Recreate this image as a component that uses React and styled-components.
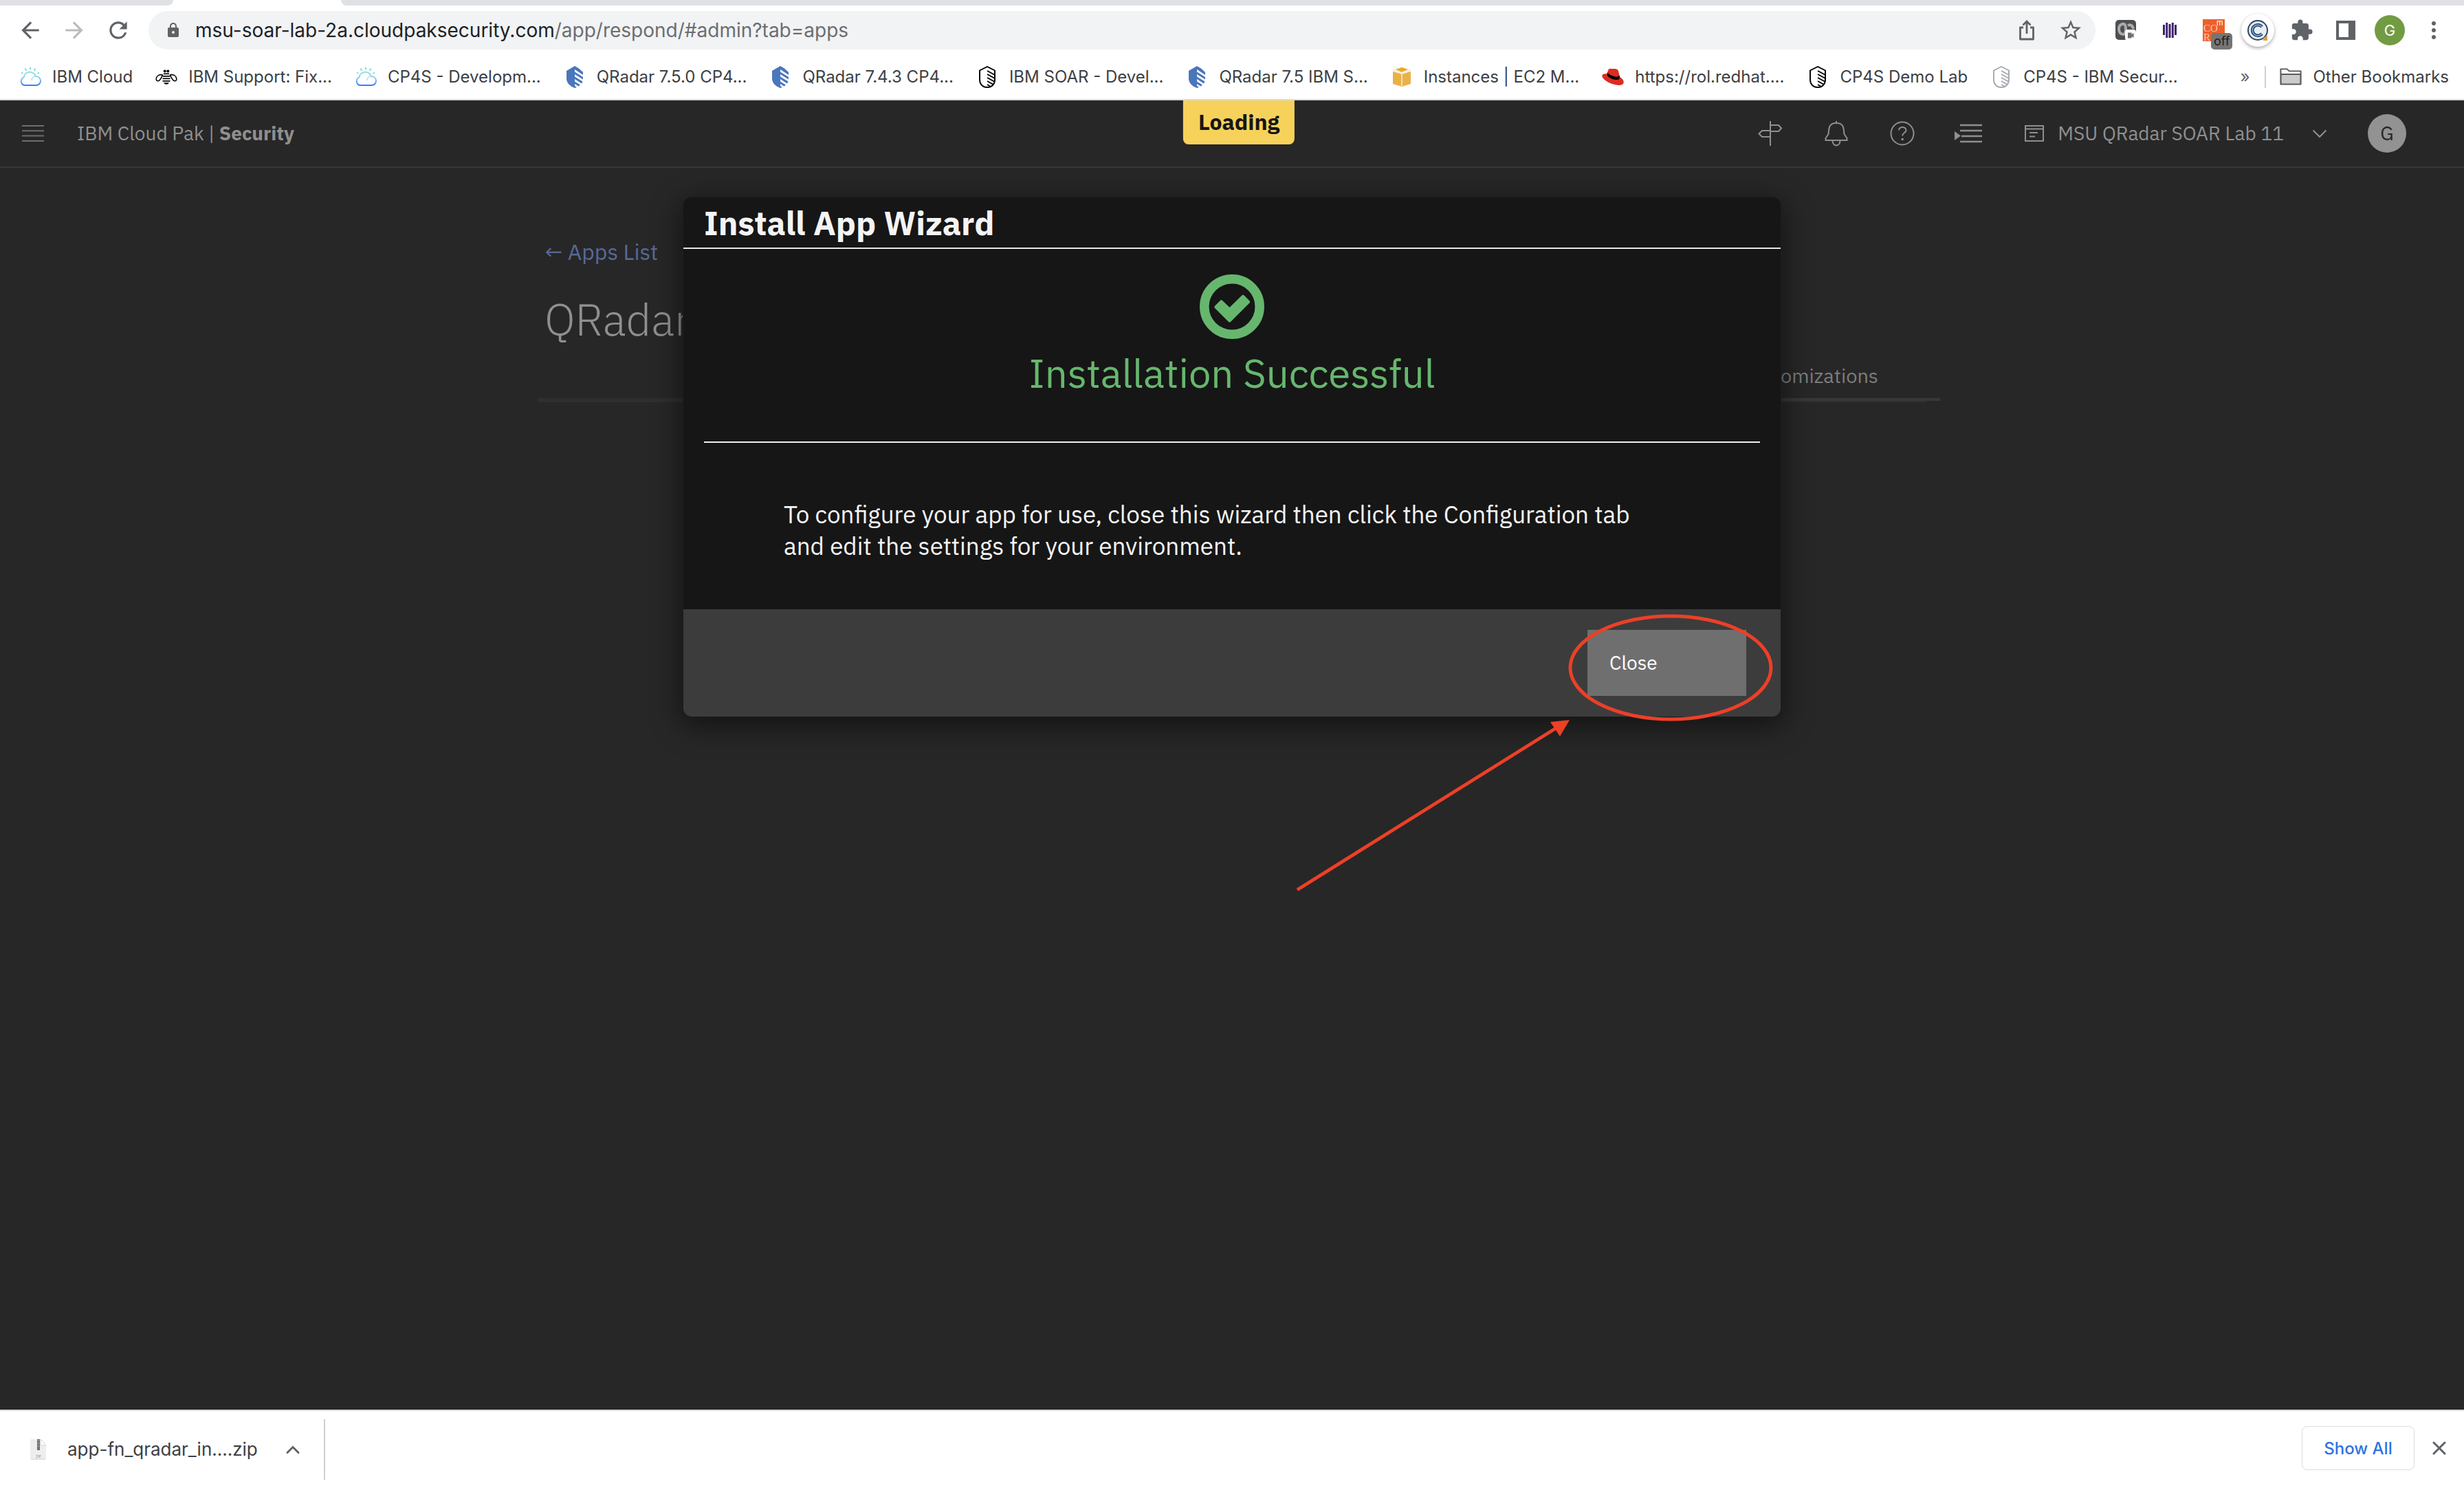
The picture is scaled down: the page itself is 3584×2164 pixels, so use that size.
import React from "react";
import styled, { createGlobalStyle } from "styled-components";
import { MdArrowBack, MdArrowForward, MdRefresh, MdLock, MdStarBorder, MdExtension } from "react-icons/md";

const GlobalStyle = createGlobalStyle`
  *, *::before, *::after { box-sizing: border-box; }
  body { margin: 0; background: #272727; }
  button, a { font: inherit; color: inherit; text-decoration: none; }
  button { border: 0; padding: 0; background: none; cursor: pointer; }
  h1, h2, p, ul { margin: 0; padding: 0; font-weight: inherit; }
  svg { display: block; flex: none; }
`;

const chromeFont = `Inter, Roboto, sans-serif`;
const appFont = `"IBM Plex Sans", "Noto Sans", Inter, sans-serif`;

/* ---------- browser chrome ---------- */

const Window = styled.div`
  display: flex;
  flex-direction: column;
  min-height: 100vh;
  font-family: ${chromeFont};
  color: #3c4043;
`;

const TabStrip = styled.div`
  display: flex;
  justify-content: space-between;
  height: 8px;
  background: #fff;
`;

const InactiveTabs = styled.div`
  background: #dfe1e5;
  flex: ${(p) => (p.$grow ? "1" : "0 0 252px")};
  margin-left: ${(p) => (p.$grow ? "244px" : "0")};
  border-radius: ${(p) => (p.$grow ? "0 0 0 12px" : "0 0 12px 0")};
`;

const Toolbar = styled.div`
  display: flex;
  align-items: center;
  padding: 8px 12px 8px 28px;
  background: #fff;
`;

const NavButtons = styled.nav`
  display: flex;
  gap: 32px;
  margin-right: 28px;
`;

const NavButton = styled.button`
  display: flex;
  align-items: center;
  justify-content: center;
  width: 32px;
  height: 32px;
  color: ${(p) => (p.$off ? "#babcbe" : "#5f6368")};
`;

const Omnibox = styled.div`
  display: flex;
  align-items: center;
  flex: 1;
  height: 56px;
  margin-right: 12px;
  padding: 0 4px 0 24px;
  border-radius: 28px;
  background: #f1f3f4;
  color: #5f6368;
`;

const Address = styled.div`
  flex: 1;
  margin-left: 20px;
  font-size: 28px;
  line-height: 36px;
  white-space: nowrap;
  color: #6b6e71;
`;

const Host = styled.span`
  color: #202124;
`;

const ToolButton = styled.button`
  position: relative;
  display: flex;
  align-items: center;
  justify-content: center;
  width: 64px;
  height: 56px;
  color: #5f6368;
`;

const Badge = styled.span`
  position: absolute;
  left: 28px;
  bottom: 0;
  padding: 0 4px;
  border-radius: 5px;
  background: #757575;
  color: #202124;
  font-size: 18px;
  line-height: 24px;
`;

const Halo = styled.span`
  display: flex;
  align-items: center;
  justify-content: center;
  width: 48px;
  height: 48px;
  border-radius: 50%;
  background: #fff;
  box-shadow: 0 2px 5px rgba(0, 0, 0, 0.35);
`;

const Profile = styled.span`
  display: flex;
  align-items: center;
  justify-content: center;
  width: 44px;
  height: 44px;
  border-radius: 50%;
  background: #719c43;
  color: #fff;
  font-size: 22px;
`;

const BookmarksBar = styled.div`
  display: flex;
  align-items: center;
  height: 66px;
  padding: 0 22px 0 28px;
  border-bottom: 2px solid #dadcdc;
  background: #fff;
  font-size: 24px;
  line-height: 32px;
  white-space: nowrap;
`;

const BookmarkList = styled.ul`
  display: flex;
  flex: 1;
  gap: 33px;
  list-style: none;
`;

const Bookmark = styled.a`
  display: flex;
  align-items: center;
  gap: 16px;
`;

const More = styled.button`
  padding: 0 22px;
  color: #5f6368;
`;

const BarDivider = styled.span`
  width: 2px;
  height: ${(p) => p.$size}px;
  background: #cfd0d2;
`;

const OtherBookmarks = styled(Bookmark)`
  margin-left: 20px;
`;

const DownloadBar = styled.footer`
  display: flex;
  align-items: center;
  height: 114px;
  padding: 0 20px 0 40px;
  border-top: 2px solid #dadcdc;
  background: #fff;
`;

const DownloadItem = styled.button`
  display: flex;
  align-items: center;
  margin-right: 34px;
  font-size: 26px;
  line-height: 32px;
`;

const FileName = styled.span`
  margin: 0 40px 0 26px;
`;

const DownloadActions = styled.div`
  display: flex;
  align-items: center;
  gap: 20px;
  margin-left: auto;
  padding-bottom: 4px;
`;

const ShowAll = styled.button`
  width: 164px;
  height: 64px;
  border: 1px solid #dadce0;
  border-radius: 8px;
  color: #2f72e2;
  font-size: 24px;
  font-weight: 500;
`;

/* ---------- application ---------- */

const AppArea = styled.div`
  position: relative;
  display: flex;
  flex: 1;
  flex-direction: column;
  background: #272727;
  font-family: ${appFont};
  color: #8f8f8f;
`;

const AppHeader = styled.header`
  display: flex;
  align-items: center;
  height: 98px;
  padding: 0 84px 0 32px;
  border-bottom: 2px solid #383838;
  font-size: 28px;
  line-height: 36px;
  white-space: nowrap;
`;

const Brand = styled.a`
  flex: 1;
  margin-left: 48px;
`;

const HeaderButton = styled.button`
  display: flex;
  align-items: center;
  justify-content: center;
  width: 96px;
  height: 96px;
`;

const AccountButton = styled.button`
  display: flex;
  align-items: center;
  margin: 0 54px 0 32px;
`;

const AccountName = styled.span`
  margin: 0 36px 0 18px;
`;

const Avatar = styled.button`
  width: 56px;
  height: 56px;
  border-radius: 50%;
  background: #929292;
  color: #272727;
`;

const LoadingBadge = styled.div`
  position: absolute;
  top: 0;
  left: calc(50% + 10px);
  transform: translateX(-50%);
  padding: 11px 22px 13px;
  border-radius: 0 0 8px 8px;
  background: #f6d25b;
  color: #161616;
  font-size: 32px;
  font-weight: 700;
  line-height: 40px;
`;

const Page = styled.main`
  width: 2040px;
  max-width: 100%;
  margin: 0 auto;
  padding: 102px 0 0;
  position: relative;
  left: 10px;
`;

const BackLink = styled.a`
  display: block;
  padding: 0 10px;
  color: #576a98;
  font-size: 32px;
  line-height: 40px;
`;

const PageTitle = styled.h1`
  margin: 38px 0 24px;
  padding: 0 10px;
  font-size: 64px;
  font-weight: 300;
  line-height: 80px;
`;

const Tabs = styled.div`
  display: flex;
`;

const TabFiller = styled.div`
  flex: 1;
  border-bottom: 6px solid #2f2f2f;
`;

const Tab = styled.button`
  padding: 0 90px 15px 32px;
  margin-bottom: 2px;
  border-bottom: 4px solid #383838;
  box-shadow: -20px 2px 0 #2f2f2f;
  background: #272727;
  color: #7c7c7c;
  font-size: 29px;
  line-height: 36px;
`;

const Overlay = styled.div`
  position: absolute;
  inset: 0;
  display: flex;
  justify-content: center;
  align-items: flex-start;
  padding-top: 141px;
`;

const Dialog = styled.section`
  position: relative;
  width: 1596px;
  border-radius: 12px;
  background: #161616;
  box-shadow: 0 0 0 1px #1e1e1e, 0 10px 40px 4px rgba(0, 0, 0, 0.5);
  color: #f4f4f4;
`;

const DialogTitle = styled.h2`
  padding: 5px 30px 4px;
  border-bottom: 2px solid #e8e6e8;
  font-size: 48px;
  font-weight: 700;
  line-height: 64px;
`;

const Result = styled.div`
  display: flex;
  flex-direction: column;
  align-items: center;
  gap: 14px;
  margin: 0 30px;
  padding: 37px 0 63px;
  border-bottom: 2px solid #f1eff1;
  color: #66b76d;
  font-size: 58px;
  line-height: 72px;
`;

const Message = styled.p`
  max-width: 1426px;
  padding: 81px 0 69px 146px;
  font-size: 35px;
  line-height: 46px;
`;

const DialogFooter = styled.footer`
  display: flex;
  justify-content: flex-end;
  padding: 30px 50px;
  border-radius: 0 0 12px 12px;
  background: #3c3c3c;
`;

const CloseButton = styled.button`
  width: 231px;
  height: 96px;
  padding: 0 32px;
  background: #6f6f6f;
  color: #fff;
  font-size: 28px;
  line-height: 36px;
  text-align: left;
`;

const Annotation = styled.svg`
  position: absolute;
  top: 593px;
  left: 886px;
  pointer-events: none;
`;

/* ---------- drawings ---------- */

const CloudIcon = () => (
  <svg width="32" height="32" viewBox="0 0 32 32" fill="none">
    <defs>
      <linearGradient id="cloud" x1="0" y1="0" x2="0" y2="1">
        <stop offset="0" stopColor="#8be3d6" />
        <stop offset="0.5" stopColor="#8ec9f7" />
        <stop offset="1" stopColor="#3b7bf6" />
      </linearGradient>
    </defs>
    <path d="M8 28a6 6 0 0 1-1.500-11.500a9 9 0 0 1 17.500-1.500a6.500 6.500 0 0 1 1 13z" stroke="url(#cloud)" strokeWidth="2" />
    <path d="M24 15c-4 0-6 3-6 6" stroke="#a8d8f8" strokeWidth="1.500" />
    <path d="M16 1.500v4M8.500 3.500l1.800 3.500M23.500 3.500l-1.800 3.500M3 9.500l2.500 1.500M29 9.500l-2.500 1.500" stroke="#79dccb" strokeWidth="1.700" />
  </svg>
);

const BeeIcon = () => (
  <svg width="32" height="32" viewBox="0 0 32 32">
    <g fill="#000">
      <circle cx="13.700" cy="7.500" r="2" />
      <circle cx="18.300" cy="7.500" r="2" />
      <rect x="12" y="10.500" width="8" height="1.700" />
      <rect x="10.500" y="14" width="11" height="1.700" />
      <rect x="10.500" y="17.500" width="11" height="1.700" />
      <rect x="10.500" y="21" width="11" height="1.700" />
      <path d="M12 24.200h8l-2 2.300h-4z" />
    </g>
    <path d="M10.500 13C5 11.500 1 15 1.200 19.500c.3 3 4 2.500 5.500.5 1.700-2.300 3-4.500 3.800-7zM21.500 13C27 11.500 31 15 30.800 19.500c-.3 3-4 2.500-5.500.5-1.700-2.300-3-4.500-3.800-7z" fill="none" stroke="#000" strokeWidth="1.500" />
  </svg>
);

const ShieldIcon = () => (
  <svg width="32" height="32" viewBox="0 0 32 32" fill="#4a76bb">
    <path d="M16 0v32C8 29 4 24 4 18V7z" />
    <path d="M16 0l6 3.500L28 9v4L16 5zM16 8.500l12 7.500v3.500l-12-7.500zM16 15.500l11.500 7-1.500 3-10-6.500zM16 22.500l8 5-2.500 2-5.500-3.500zM16 29l3 1.700L16 32z" />
  </svg>
);

const StripedShield = ({ color }) => (
  <svg width="32" height="32" viewBox="0 0 32 32" fill="none" stroke={color}>
    <path d="M16 31C9 31 5 26 5 20V6.500L16 1l11 5.500V20c0 6-4 11-11 11z" strokeWidth="1.900" />
    <path d="M16 7l11 6M16 12l11 6M16 17l11 6M16 22l9 5M16 27l5 3" strokeWidth="1.900" />
  </svg>
);

const CubeIcon = () => (
  <svg width="32" height="32" viewBox="0 0 32 32">
    <path d="M16 2l13 4v20l-13 4-13-4V6z" fill="#e9b248" />
    <path d="M8 5l8-3 8 3-8 3z" fill="#eba92c" />
    <path d="M3 6l4-1 9 4 9-4 4 1v2l-13 4L3 8z" fill="#fbf1dc" />
    <path d="M15 11h2v18h-2z" fill="#f7dfae" />
  </svg>
);

const HatIcon = () => (
  <svg width="32" height="32" viewBox="0 0 32 32">
    <path d="M9 6.500c.8-2.500 3-3.500 6-2.200 1.600-.6 6-.3 8 1.200 1.500 1.200 2 7 3 10.500 4 2 6 5 5.700 8-.8 4.500-8 4.800-15 2.500C8 24 .5 18.500.3 14.500.3 11.500 4 11 7.500 11.500z" fill="#dd2c20" />
    <path d="M7.500 11.500c0 3 3 5.500 8 7.500 5.500 2 11 1.500 10.500-3.500l-.6-2.200c-1 3-5 3-10 1C11 12.800 8.600 10.500 8.300 9z" fill="#000" />
  </svg>
);

const FolderIcon = () => (
  <svg width="32" height="32" viewBox="0 0 32 32">
    <path d="M1.500 26.500V4.500h9l3 3h17v19z" fill="#cbcbcb" stroke="#5a5a5a" strokeWidth="2.200" strokeLinejoin="round" />
    <path d="M2.500 5.500h8l3 3h16V11h-27z" fill="#fff" />
    <path d="M1.500 12h29" stroke="#5a5a5a" strokeWidth="2" />
  </svg>
);

const ShareIcon = () => (
  <svg width="32" height="32" viewBox="0 0 32 32" fill="none" stroke="#5f6368" strokeWidth="2.800">
    <path d="M11 12H6.500v17h19V12H21" strokeLinejoin="round" />
    <path d="M16 21V4M10.500 8.500L16 3l5.500 5.500" />
  </svg>
);

const RecorderIcon = () => (
  <svg width="30" height="30" viewBox="0 0 30 30">
    <rect width="30" height="29" rx="5" fill="#4d4f50" />
    <path d="M8 7c5-3 7 0 7 6s-1 8-4 8-6-3-6-8c0-3 1-5 3-6zM18 8c4-2 7 0 8 5" stroke="#a9abac" strokeWidth="4" fill="none" />
    <rect x="14" y="14" width="16" height="16" rx="4" fill="#fff" />
    <path d="M18 18.500h5.500v2.500l3-2v7l-3-2v2.500H18z" fill="#6b6d6e" />
  </svg>
);

const WaveIcon = () => (
  <svg width="20" height="24" viewBox="0 0 20 24" stroke="#40236f" strokeWidth="3">
    <path d="M1.500 4v15M5.700 1v22M10 3v20M14.300 1v22M18.500 4v15" />
  </svg>
);

const CoreIcon = () => (
  <svg width="32" height="32" viewBox="0 0 32 32" overflow="visible">
    <rect width="32" height="32" fill="#ee5f2b" />
    <text x="1" y="18" fontFamily="Liberation Serif, serif" fontSize="15" fill="#fbc9a8">CO</text>
    <text x="1" y="31" fontFamily="Liberation Serif, serif" fontSize="15" fill="#fbc9a8">R</text>
    <text x="20" y="9" fontFamily="Inter, sans-serif" fontSize="11" fill="#fff">m</text>
  </svg>
);

const CIcon = () => (
  <svg width="32" height="32" viewBox="0 0 32 32" fill="none">
    <circle cx="16" cy="16" r="14" fill="#e6edf3" stroke="#2d4566" strokeWidth="2" />
    <path d="M22 11a7.800 7.800 0 1 0 0 10" stroke="#21406b" strokeWidth="4.500" />
    <path d="M22 11a7.800 7.800 0 1 0 0 10" stroke="#8db6da" strokeWidth="1.500" />
    <path d="M24 31v-4l6-3v7z" fill="#d9a13b" />
  </svg>
);

const PanelIcon = () => (
  <svg width="28" height="28" viewBox="0 0 28 28">
    <path d="M0 0h28v28H0zM4 4v20h14V4z" fill="#5f6368" fillRule="evenodd" />
  </svg>
);

const DotsIcon = () => (
  <svg width="8" height="28" viewBox="0 0 8 28" fill="#5f6368">
    <circle cx="4" cy="4" r="3" />
    <circle cx="4" cy="14" r="3" />
    <circle cx="4" cy="24" r="3" />
  </svg>
);

const MenuIcon = () => (
  <svg width="32" height="24" viewBox="0 0 32 24" stroke="#6e6e6e" strokeWidth="2">
    <path d="M0 1h32M0 8.300h32M0 15.600h32M0 23h32" />
  </svg>
);

const SignpostIcon = () => (
  <svg width="36" height="36" viewBox="0 0 36 36" fill="none" stroke="#8f8f8f" strokeWidth="2">
    <path d="M18 0v36M18 6h12l4 4.500-4 4.500H18M18 14H6l-4.500 4.500L6 23h12" />
  </svg>
);

const BellIcon = () => (
  <svg width="36" height="38" viewBox="0 0 36 38" fill="none" stroke="#8f8f8f" strokeWidth="2">
    <path d="M18 1v3M2.500 29v-3l4-6c1-9 .5-16 11.500-16s10.500 7 11.500 16l4 6v3z" />
    <path d="M12.500 29c0 10 11 10 11 0" />
  </svg>
);

const HelpIcon = () => (
  <svg width="36" height="36" viewBox="0 0 36 36" fill="none" stroke="#8f8f8f" strokeWidth="2">
    <circle cx="18" cy="18" r="16.500" />
    <path d="M13 13.500c0-6 10.500-6 10.500 0 0 3.500-5.300 3.500-5.300 8" />
    <circle cx="18.200" cy="26.500" r="1.800" fill="#8f8f8f" stroke="none" />
  </svg>
);

const IndentIcon = () => (
  <svg width="40" height="28" viewBox="0 0 40 28" stroke="#8f8f8f" strokeWidth="2.400">
    <path d="M8 2h32M8 10h32M10 18h30M8 26h32" />
    <path d="M0 11l9 6.500L0 24z" fill="#8f8f8f" stroke="none" />
  </svg>
);

const AccountIcon = () => (
  <svg width="32" height="32" viewBox="0 0 32 32" fill="none" stroke="#8f8f8f" strokeWidth="2">
    <rect x="3" y="5" width="26" height="22" />
    <path d="M3 9.500h26M9 15h12M9 20.500h8" />
  </svg>
);

const ChevronIcon = () => (
  <svg width="32" height="32" viewBox="0 0 32 32" fill="none" stroke="#8f8f8f" strokeWidth="2">
    <path d="M6.500 11.500l9.500 9.500 9.500-9.500" />
  </svg>
);

const SuccessIcon = () => (
  <svg width="94" height="94" viewBox="0 0 94 94">
    <circle cx="47" cy="47" r="40.200" fill="none" stroke="#66b76d" strokeWidth="13.500" />
    <path d="M24 47.500l7.500-7.500L43.500 51.500 63 32.500l7.500 7.500-27 27z" fill="#66b76d" stroke="#66b76d" strokeWidth="5" strokeLinejoin="round" />
  </svg>
);

const ZipIcon = () => (
  <svg width="32" height="32" viewBox="0 0 32 32">
    <path d="M6 1h13l8 9v18a2 2 0 0 1-2 2H6a2 2 0 0 1-2-2V3a2 2 0 0 1 2-2z" fill="#eeeeee" />
    <path d="M19 1l8 9h-8z" fill="#fff" stroke="#d5d5d5" />
    <path d="M4.500 30h22" stroke="#cccccc" />
    <rect x="14" y="1" width="4" height="16" fill="#6f7275" />
    <path d="M16 2v12" stroke="#c4c4c4" strokeDasharray="2 2" />
    <text x="12" y="28" fontFamily="Inter, sans-serif" fontSize="5" fill="#8a8a8a">ZIP</text>
  </svg>
);

const CaretUpIcon = () => (
  <svg width="22" height="16" viewBox="0 0 22 16" fill="none" stroke="#5f6368" strokeWidth="3" strokeLinecap="round">
    <path d="M3 12.500l8-8 8 8" />
  </svg>
);

const CrossIcon = () => (
  <svg width="32" height="32" viewBox="0 0 32 32" stroke="#5f6368" strokeWidth="3" strokeLinecap="round">
    <path d="M8 8l16 16M24 8L8 24" />
  </svg>
);

/* ---------- data ---------- */

const bookmarks = [
  ["IBM Cloud", <CloudIcon />],
  ["IBM Support: Fix...", <BeeIcon />],
  ["CP4S - Developm...", <CloudIcon />],
  ["QRadar 7.5.0 CP4...", <ShieldIcon />],
  ["QRadar 7.4.3 CP4...", <ShieldIcon />],
  ["IBM SOAR - Devel...", <StripedShield color="#000" />],
  ["QRadar 7.5 IBM S...", <ShieldIcon />],
  ["Instances | EC2 M...", <CubeIcon />],
  ["https://rol.redhat....", <HatIcon />],
  ["CP4S Demo Lab", <StripedShield color="#000" />],
  ["CP4S - IBM Secur...", <StripedShield color="#a5a9b0" />],
];

const extensions = [
  ["Recorder", <RecorderIcon />],
  ["Wave", <WaveIcon />],
  ["Core", <><CoreIcon /><Badge>off</Badge></>],
  ["C", <Halo><CIcon /></Halo>],
  ["Extensions", <MdExtension size={34} />],
  ["Side panel", <PanelIcon />],
  ["Profile", <Profile>G</Profile>],
  ["Menu", <DotsIcon />],
];

const headerActions = [
  ["Tour", <SignpostIcon />],
  ["Notifications", <BellIcon />],
  ["Help", <HelpIcon />],
  ["Tasks", <IndentIcon />],
];

export default function App() {
  return (
    <Window>
      <GlobalStyle />
      <TabStrip>
        <InactiveTabs />
        <InactiveTabs $grow />
      </TabStrip>
      <Toolbar>
        <NavButtons>
          <NavButton aria-label="Back"><MdArrowBack size={38} /></NavButton>
          <NavButton aria-label="Forward" $off><MdArrowForward size={38} /></NavButton>
          <NavButton aria-label="Reload"><MdRefresh size={38} /></NavButton>
        </NavButtons>
        <Omnibox>
          <MdLock size={24} />
          <Address role="textbox" aria-label="Address">
            <Host>msu-soar-lab-2a.cloudpaksecurity.com</Host>/app/respond/#admin?tab=apps
          </Address>
          <ToolButton aria-label="Share"><ShareIcon /></ToolButton>
          <ToolButton aria-label="Bookmark this page"><MdStarBorder size={36} /></ToolButton>
        </Omnibox>
        {extensions.map(([label, icon]) => (
          <ToolButton key={label} aria-label={label}>{icon}</ToolButton>
        ))}
      </Toolbar>
      <BookmarksBar>
        <BookmarkList>
          {bookmarks.map(([label, icon]) => (
            <li key={label}>
              <Bookmark href="#">{icon}{label}</Bookmark>
            </li>
          ))}
        </BookmarkList>
        <More aria-label="More bookmarks">»</More>
        <BarDivider $size={32} />
        <OtherBookmarks href="#"><FolderIcon />Other Bookmarks</OtherBookmarks>
      </BookmarksBar>

      <AppArea>
        <AppHeader>
          <button aria-label="Open menu"><MenuIcon /></button>
          <Brand href="#">IBM Cloud Pak | <b>Security</b></Brand>
          {headerActions.map(([label, icon]) => (
            <HeaderButton key={label} aria-label={label}>{icon}</HeaderButton>
          ))}
          <AccountButton>
            <AccountIcon />
            <AccountName>MSU QRadar SOAR Lab 11</AccountName>
            <ChevronIcon />
          </AccountButton>
          <Avatar>G</Avatar>
        </AppHeader>
        <LoadingBadge role="status">Loading</LoadingBadge>

        <Page>
          <BackLink href="#">← Apps List</BackLink>
          <PageTitle>QRadar</PageTitle>
          <Tabs>
            <TabFiller />
            <Tab>Customizations</Tab>
          </Tabs>
        </Page>

        <Overlay>
          <Dialog role="dialog" aria-labelledby="wizard-title">
            <DialogTitle id="wizard-title">Install App Wizard</DialogTitle>
            <Result>
              <SuccessIcon />
              <p>Installation Successful</p>
            </Result>
            <Message>
              To configure your app for use, close this wizard then click the Configuration tab and edit the
              settings for your environment.
            </Message>
            <DialogFooter>
              <CloseButton>Close</CloseButton>
            </DialogFooter>
            <Annotation width="710" height="430" viewBox="0 0 710 430" fill="none" stroke="#ec4027" strokeWidth="5">
              <ellipse cx="550" cy="91" rx="146" ry="75" />
              <path d="M7 414L388 176" />
              <path d="M403 167l-28 3 14 21z" fill="#ec4027" stroke="none" />
            </Annotation>
          </Dialog>
        </Overlay>
      </AppArea>

      <DownloadBar>
        <DownloadItem>
          <ZipIcon />
          <FileName>app-fn_qradar_in....zip</FileName>
          <CaretUpIcon />
        </DownloadItem>
        <BarDivider $size={88} />
        <DownloadActions>
          <ShowAll>Show All</ShowAll>
          <button aria-label="Close downloads"><CrossIcon /></button>
        </DownloadActions>
      </DownloadBar>
    </Window>
  );
}
